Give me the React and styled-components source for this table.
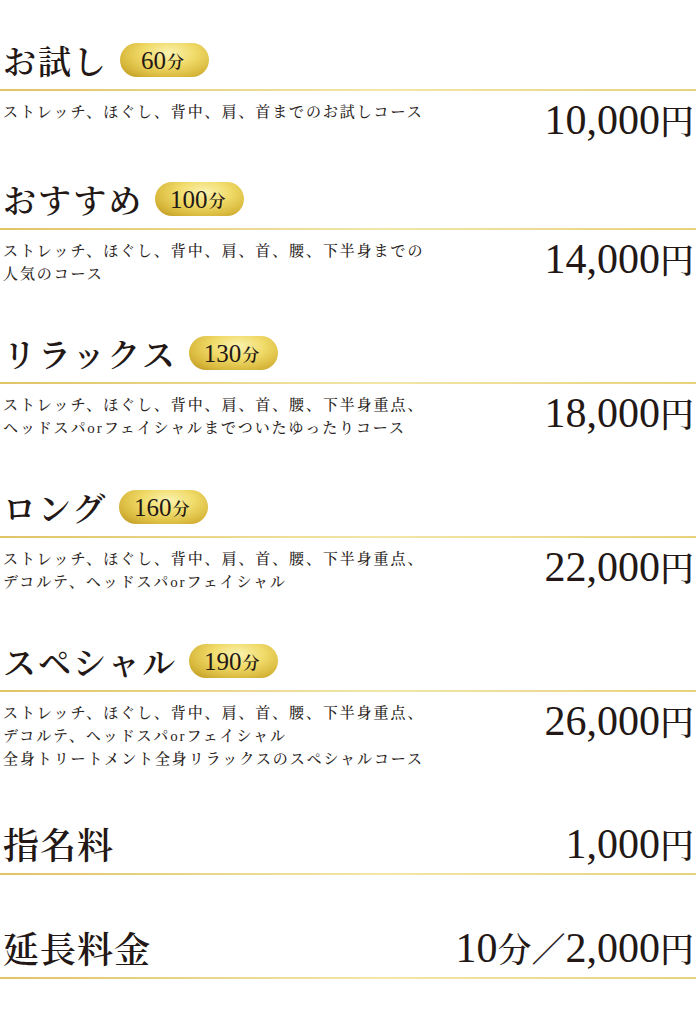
import React from "react";
import styled, { createGlobalStyle } from "styled-components";

const courses = [
  {
    name: "お試し",
    minutes: "60",
    desc: ["ストレッチ、ほぐし、背中、肩、首までのお試しコース"],
    price: "10,000",
  },
  {
    name: "おすすめ",
    minutes: "100",
    desc: ["ストレッチ、ほぐし、背中、肩、首、腰、下半身までの", "人気のコース"],
    price: "14,000",
  },
  {
    name: "リラックス",
    minutes: "130",
    desc: [
      "ストレッチ、ほぐし、背中、肩、首、腰、下半身重点、",
      "ヘッドスパorフェイシャルまでついたゆったりコース",
    ],
    price: "18,000",
  },
  {
    name: "ロング",
    minutes: "160",
    desc: [
      "ストレッチ、ほぐし、背中、肩、首、腰、下半身重点、",
      "デコルテ、ヘッドスパorフェイシャル",
    ],
    price: "22,000",
  },
  {
    name: "スペシャル",
    minutes: "190",
    desc: [
      "ストレッチ、ほぐし、背中、肩、首、腰、下半身重点、",
      "デコルテ、ヘッドスパorフェイシャル",
      "全身トリートメント全身リラックスのスペシャルコース",
    ],
    price: "26,000",
  },
];

const SERIF =
  '"Liberation Serif", "Noto Serif CJK JP", "Noto Sans CJK JP", serif';
const CJK = '"Noto Serif CJK JP", "Noto Sans CJK JP", serif';

const GlobalStyle = createGlobalStyle`
  html, body {
    margin: 0;
    padding: 0;
    background: #ffffff;
  }
  body {
    font-family: ${SERIF};
    color: #231815;
  }
`;

export default function App() {
  return (
    <>
      <GlobalStyle />
      <Page>
        {courses.map((c) => (
          <Course key={c.name}>
            <Head>
              <Title>{c.name}</Title>
              <Badge>
                {c.minutes}
                <small>分</small>
              </Badge>
            </Head>
            <Body>
              <Desc>
                {c.desc.map((line) => (
                  <div key={line}>{line}</div>
                ))}
              </Desc>
              <Price>
                {c.price}
                <Unit>円</Unit>
              </Price>
            </Body>
          </Course>
        ))}

        <Extra>
          <Head $spread>
            <ExtraTitle>指名料</ExtraTitle>
            <Price $flat>
              1,000<Unit>円</Unit>
            </Price>
          </Head>
        </Extra>
        <Extra>
          <Head $spread>
            <ExtraTitle>延長料金</ExtraTitle>
            <Price $flat>
              10<Unit>分</Unit>
              <Unit>／</Unit>
              2,000<Unit>円</Unit>
            </Price>
          </Head>
        </Extra>
      </Page>
    </>
  );
}

const Page = styled.div`
  width: 696px;
  padding: 40px 0 40px;
  box-sizing: border-box;
`;

const Course = styled.section`
  & + & {
    margin-top: 47px;
  }
`;

const Extra = styled.section`
  margin-top: 53px;
`;

const Head = styled.div`
  display: flex;
  align-items: center;
  justify-content: ${(p) => (p.$spread ? "space-between" : "flex-start")};
  height: 40px;
  padding: 0 2px 9px 3px;
  border-bottom: 2px solid #ead68a;
  border-image: linear-gradient(90deg, #e0c466 0%, #f2e6a8 55%, #e8d27c 100%) 1;
`;

const Title = styled.h2`
  margin: 0;
  font-family: ${CJK};
  font-size: 33px;
  font-weight: 600;
  letter-spacing: 2px;
  line-height: 40px;
  color: #231815;
`;

const ExtraTitle = styled(Title)`
  font-size: 36px;
  letter-spacing: 1px;
`;

const Badge = styled.span`
  display: inline-flex;
  align-items: center;
  justify-content: center;
  width: 89px;
  height: 34px;
  margin-left: 12px;
  border-radius: 17px;
  background: radial-gradient(
    ellipse 75% 95% at 55% 30%,
    #fbf3b0 0%,
    #f0da68 40%,
    #d8b83c 75%,
    #b9951e 100%
  );
  font-family: ${SERIF};
  font-size: 25px;
  line-height: 1;
  color: #231815;
  padding-right: 4px;
  box-sizing: border-box;

  small {
    font-family: ${CJK};
    font-size: 17px;
    font-weight: 600;
    margin-left: 1px;
  }
`;

const Body = styled.div`
  display: flex;
  justify-content: space-between;
  align-items: flex-start;
  padding: 10px 2px 0 3px;
`;

const Desc = styled.div`
  font-family: ${SERIF};
  font-size: 15px;
  font-weight: 500;
  line-height: 23px;
  letter-spacing: 1.9px;
  color: #2b2523;
`;

const Price = styled.div`
  font-family: "Liberation Serif", serif;
  font-size: 42px;
  line-height: 38px;
  margin-bottom: ${(p) => (p.$flat ? "0" : "-7px")};
  color: #231815;
  white-space: nowrap;
`;

const Unit = styled.span`
  font-family: ${CJK};
  font-size: 34px;
  font-weight: 500;
`;
